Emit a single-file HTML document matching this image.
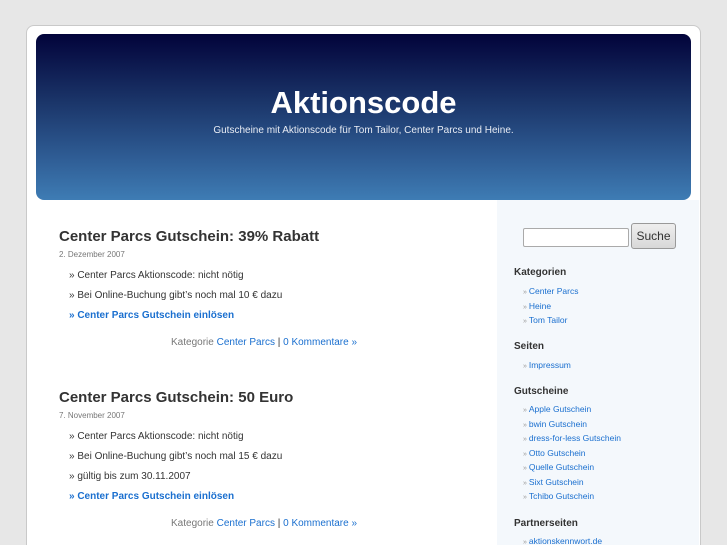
<!DOCTYPE html>
<html style="overflow:hidden;height:545px"><head><meta charset="utf-8"><style>
*{margin:0;padding:0;box-sizing:border-box}
body{width:727px;height:545px;overflow:hidden;background:#e7e7e7;font-family:"Liberation Sans",sans-serif;position:relative}
.page{position:absolute;left:26px;top:25px;width:675px;height:530px;background:#fff;border:1px solid #c9c9c9;border-radius:8px}
.hdr{position:absolute;left:36px;top:34px;width:655px;height:166px;border-radius:8px;background:linear-gradient(#02033a 0%,#1a3468 40%,#2f5d95 75%,#3e7cb4 100%)}
.hdr h1{position:absolute;left:0;right:0;top:51px;text-align:center;color:#fff;font-size:31px;font-weight:bold}
.hdr p{position:absolute;left:0;right:0;top:91px;text-align:center;color:#e8ecf4;font-size:10px}
.side{position:absolute;left:497px;top:200px;width:202px;height:345px;background:#f4f8fc}
.a{position:absolute;font-size:10px;color:#333;white-space:nowrap}
.t{font-size:15px;font-weight:bold;color:#333}
.d{font-size:8px;color:#777}
.l{color:#1a6fcf}
.b{font-weight:bold;color:#1a6fcf}
.k{color:#777}
.h{font-size:10px;font-weight:bold;color:#333}
.s{font-size:8.5px;color:#1a6fcf}
.s:before{content:"» ";color:#999;font-size:7px}
input{position:absolute;left:523px;top:228px;width:106px;height:19px;border:1px solid #aaa;border-radius:2px;background:#fff}
button{position:absolute;left:631px;top:223px;width:45px;height:26px;border:1px solid #999;border-radius:3px;background:linear-gradient(#eee,#d8d8d8);font-family:"Liberation Sans",sans-serif;font-size:12px;color:#333}
</style></head><body>
<div class="page"></div>
<div class="hdr"><h1>Aktionscode</h1><p>Gutscheine mit Aktionscode für Tom Tailor, Center Parcs und Heine.</p></div>
<div class="side"></div>

<div class="a t" style="left:59px;top:228px">Center Parcs Gutschein: 39% Rabatt</div>
<div class="a d" style="left:59px;top:250px">2. Dezember 2007</div>
<div class="a" style="left:69px;top:270px">» Center Parcs Aktionscode: nicht nötig</div>
<div class="a" style="left:69px;top:290px">» Bei Online-Buchung gibt’s noch mal 10 € dazu</div>
<div class="a b" style="left:69px;top:310px">» Center Parcs Gutschein einlösen</div>
<div class="a" style="left:171px;top:337px"><span class="k">Kategorie</span> <span class="l">Center Parcs</span> | <span class="l">0 Kommentare »</span></div>

<div class="a t" style="left:59px;top:389px">Center Parcs Gutschein: 50 Euro</div>
<div class="a d" style="left:59px;top:411px">7. November 2007</div>
<div class="a" style="left:69px;top:431px">» Center Parcs Aktionscode: nicht nötig</div>
<div class="a" style="left:69px;top:451px">» Bei Online-Buchung gibt’s noch mal 15 € dazu</div>
<div class="a" style="left:69px;top:471px">» gültig bis zum 30.11.2007</div>
<div class="a b" style="left:69px;top:491px">» Center Parcs Gutschein einlösen</div>
<div class="a" style="left:171px;top:518px"><span class="k">Kategorie</span> <span class="l">Center Parcs</span> | <span class="l">0 Kommentare »</span></div>

<input type="text"><button>Suche</button>
<div class="a h" style="left:514px;top:267px">Kategorien</div>
<div class="a s" style="left:523px;top:286px">Center Parcs</div>
<div class="a s" style="left:523px;top:301px">Heine</div>
<div class="a s" style="left:523px;top:315px">Tom Tailor</div>
<div class="a h" style="left:514px;top:341px">Seiten</div>
<div class="a s" style="left:523px;top:360px">Impressum</div>
<div class="a h" style="left:514px;top:386px">Gutscheine</div>
<div class="a s" style="left:523px;top:404px">Apple Gutschein</div>
<div class="a s" style="left:523px;top:419px">bwin Gutschein</div>
<div class="a s" style="left:523px;top:433px">dress-for-less Gutschein</div>
<div class="a s" style="left:523px;top:448px">Otto Gutschein</div>
<div class="a s" style="left:523px;top:462px">Quelle Gutschein</div>
<div class="a s" style="left:523px;top:477px">Sixt Gutschein</div>
<div class="a s" style="left:523px;top:491px">Tchibo Gutschein</div>
<div class="a h" style="left:514px;top:518px">Partnerseiten</div>
<div class="a s" style="left:523px;top:536px">aktionskennwort.de</div>
</body></html>
